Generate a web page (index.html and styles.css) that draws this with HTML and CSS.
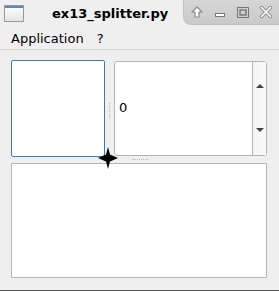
FILE: index.html
```html
<!DOCTYPE html>
<html lang="en">
<head>
    <meta charset="UTF-8">
    <title>ex13_splitter.py</title>
    <link rel="stylesheet" href="styles.css">
</head>
<body>
    <div class="window">
        <header class="titlebar">
            <div class="app-icon"><div class="app-icon-bar"></div></div>
            <div class="title">ex13_splitter.py</div>
            <div class="controls">
                <svg class="ctl" width="14" height="14" viewBox="0 0 14 14">
                    <path d="M7 2 L12 7 L9 7 L9 12 L5 12 L5 7 L2 7 Z" fill="#fff" stroke="#8a8a8a" stroke-width="1.2" stroke-linejoin="round"/>
                </svg>
                <svg class="ctl" width="14" height="14" viewBox="0 0 14 14">
                    <rect x="2.5" y="8.5" width="9" height="3" fill="#fff" stroke="#777" stroke-width="1"/>
                </svg>
                <svg class="ctl" width="14" height="14" viewBox="0 0 14 14">
                    <rect x="1.5" y="2.5" width="11" height="10" fill="none" stroke="#777" stroke-width="1"/>
                    <rect x="4" y="5" width="6" height="5" fill="none" stroke="#777" stroke-width="1.4"/>
                </svg>
                <svg class="ctl" width="14" height="14" viewBox="0 0 14 14">
                    <path d="M2.5 2.5 L11.5 11.5 M11.5 2.5 L2.5 11.5" stroke="#8a8a8a" stroke-width="3.4" stroke-linecap="round"/>
                    <path d="M2.5 2.5 L11.5 11.5 M11.5 2.5 L2.5 11.5" stroke="#fff" stroke-width="1.6" stroke-linecap="round"/>
                </svg>
            </div>
        </header>

        <nav class="menubar">
            <span class="menu-item">Application</span>
            <span class="menu-item">?</span>
        </nav>

        <main class="content">
            <div class="split-top">
                <div class="pane pane-focus"></div>
                <div class="handle-v"></div>
                <div class="spinbox">
                    <div class="spin-value">0</div>
                    <div class="spin-buttons">
                        <span class="arrow-up"></span>
                        <span class="arrow-down"></span>
                    </div>
                </div>
            </div>
            <div class="handle-h"></div>
            <div class="pane pane-bottom"></div>
        </main>

        <svg class="cursor" width="22" height="22" viewBox="0 0 22 22">
            <path d="M11 0 L13 7.5 L21 11 L13 14.5 L11 22 L9 14.5 L1 11 L9 7.5 Z" fill="#000"/>
            <rect x="7.5" y="7.5" width="7" height="7" fill="#000" transform="rotate(45 11 11)"/>
        </svg>
    </div>
</body>
</html>
```

FILE: styles.css
```css
* {
    margin: 0;
    padding: 0;
    box-sizing: border-box;
}

body {
    background: #efefef;
    font-family: "DejaVu Sans", sans-serif;
    font-size: 13px;
    color: #000;
}

.window {
    position: relative;
    width: 279px;
    height: 291px;
    display: flex;
    flex-direction: column;
    border-bottom: 1px solid #555;
}

.titlebar {
    height: 27px;
    display: flex;
    align-items: flex-start;
}

.app-icon {
    width: 20px;
    height: 17px;
    margin: 5px 0 0 4px;
    border: 1px solid #9a9a9a;
    background: linear-gradient(#ffffff, #e4e4e4);
}

.app-icon-bar {
    height: 2px;
    background: #5d86c2;
}

.title {
    font-weight: bold;
    margin: 6px 0 0 28px;
    flex: 1;
}

.controls {
    width: 96px;
    height: 25px;
    display: flex;
    align-items: center;
    gap: 9px;
    padding-left: 6px;
    background: linear-gradient(#d6d6d6, #c9c9c9);
    border-bottom-left-radius: 8px;
    border-left: 1px solid #c0c0c0;
    border-bottom: 1px solid #c0c0c0;
}

.ctl {
    display: block;
}

.menubar {
    height: 23px;
    display: flex;
    gap: 13px;
    padding: 4px 0 0 11px;
    border-bottom: 1px solid #d2d2d2;
}

.content {
    flex: 1;
    padding: 10px 12px 12px 11px;
    display: flex;
    flex-direction: column;
}

.split-top {
    height: 97px;
    display: flex;
}

.pane {
    background: #fff;
    border: 1px solid #b5b5b5;
}

.pane-focus {
    width: 94px;
    border-color: #3c7ab8;
    border-radius: 2px;
}

.handle-v {
    width: 9px;
    position: relative;
}

.handle-v::before {
    content: "";
    position: absolute;
    left: 4px;
    top: 43px;
    height: 15px;
    border-left: 1px dotted #b8b8b8;
}

.spinbox {
    flex: 1;
    margin: 1px 0;
    display: flex;
    background: #fff;
    border: 1px solid #b5b5b5;
    border-radius: 3px;
}

.spin-value {
    flex: 1;
    display: flex;
    align-items: center;
    padding-left: 4px;
    padding-bottom: 2px;
}

.spin-buttons {
    width: 14px;
    border-left: 1px solid #b5b5b5;
    background: linear-gradient(90deg, #f4f4f4, #fafafa);
    display: flex;
    flex-direction: column;
    align-items: center;
    justify-content: space-between;
    padding: 22px 0 23px;
}

.arrow-up,
.arrow-down {
    width: 0;
    height: 0;
    border-left: 4px solid transparent;
    border-right: 4px solid transparent;
}

.arrow-up {
    border-bottom: 4px solid #444;
}

.arrow-down {
    border-top: 4px solid #444;
}

.handle-h {
    height: 6px;
    position: relative;
}

.handle-h::before {
    content: "";
    position: absolute;
    left: 121px;
    top: 2px;
    width: 16px;
    border-top: 1px dotted #b8b8b8;
}

.pane-bottom {
    flex: 1;
}

.cursor {
    position: absolute;
    left: 97px;
    top: 147px;
}
```
